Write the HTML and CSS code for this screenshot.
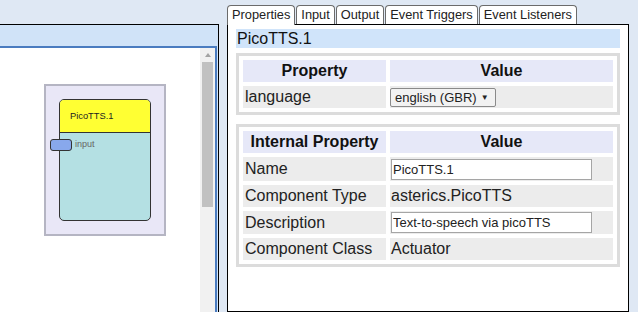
FILE: index.html
```html
<!DOCTYPE html>
<html lang="en">
<head>
  <meta charset="UTF-8">
  <title>ACS - PicoTTS.1</title>
  <link rel="stylesheet" href="styles.css">
</head>
<body>
  <div class="workspace">
    <section class="model-panel">
      <div class="model-head"></div>
      <div class="model-view">
        <div class="canvas">
          <div class="component-frame">
            <div class="component">
              <div class="component-head">PicoTTS.1</div>
              <div class="component-body">
                <span class="port"></span>
                <span class="port-label">input</span>
              </div>
            </div>
          </div>
        </div>
        <div class="scrollbar">
          <span class="arrow-up"></span>
          <div class="thumb"></div>
        </div>
      </div>
    </section>

    <section class="props">
      <nav class="tabs">
        <span class="tab active">Properties</span>
        <span class="tab">Input</span>
        <span class="tab">Output</span>
        <span class="tab">Event Triggers</span>
        <span class="tab">Event Listeners</span>
      </nav>
      <div class="tab-body">
        <div class="title">PicoTTS.1</div>

        <table class="grid">
          <thead>
            <tr>
              <th class="key">Property</th>
              <th>Value</th>
            </tr>
          </thead>
          <tbody>
            <tr>
              <td>language</td>
              <td><span class="dropdown">english (GBR) <span class="caret">▼</span></span></td>
            </tr>
          </tbody>
        </table>

        <table class="grid internal">
          <thead>
            <tr>
              <th class="key">Internal Property</th>
              <th>Value</th>
            </tr>
          </thead>
          <tbody>
            <tr class="input-row first">
              <td>Name</td>
              <td><input type="text" class="field" value="PicoTTS.1"></td>
            </tr>
            <tr>
              <td>Component Type</td>
              <td>asterics.PicoTTS</td>
            </tr>
            <tr class="input-row">
              <td>Description</td>
              <td><input type="text" class="field" value="Text-to-speech via picoTTS"></td>
            </tr>
            <tr>
              <td>Component Class</td>
              <td>Actuator</td>
            </tr>
          </tbody>
        </table>
      </div>
    </section>
  </div>
</body>
</html>
```

FILE: styles.css
```css
body {
  margin: 0;
  background-color: #dfe8f4;
  font-family: 'Liberation Sans', Arial, sans-serif;
  color: #222;
  height: 312px;
  overflow: hidden;
}

.workspace {
  display: flex;
  align-items: flex-start;
  height: 312px;
}

/* left: model designer */
.model-panel {
  width: 218px;
  height: 288px;
  margin-top: 24px;
  border-top: 1px solid #000;
  border-right: 1px solid #000;
  background-color: #d0e3f8;
  display: flex;
  flex-direction: column;
}

.model-head {
  height: 21px;
}

.model-view {
  flex: 1;
  display: flex;
  margin-right: 1px;
  border-top: 2px solid #4a7cc0;
  border-right: 2px solid #4a7cc0;
  background-color: #fff;
}

.canvas {
  flex: 1;
  position: relative;
}

.component-frame {
  position: absolute;
  left: 44px;
  top: 36px;
  padding: 13px;
  border: 2px solid #b5b5c3;
  background-color: #e9e7f7;
}

.component {
  position: relative;
  width: 90px;
  height: 120px;
  border: 1px solid #333;
  border-radius: 5px;
  background-color: #b4e0e3;
  display: flex;
  flex-direction: column;
}

.component-head {
  height: 32px;
  border-bottom: 1px solid #333;
  border-radius: 4px 4px 0 0;
  background-color: #ffff33;
  display: flex;
  align-items: center;
  padding-left: 10px;
  font-size: 9.3px;
  color: #222;
}

.component-body {
  padding: 6px 0 0 15px;
  font-size: 9px;
  line-height: 11px;
}

.port {
  position: absolute;
  left: -10px;
  top: 39px;
  width: 20px;
  height: 10px;
  border: 1px solid #333;
  border-radius: 3px;
  background-color: #88a8ec;
}

.port-label {
  color: #666;
}

.scrollbar {
  width: 15px;
  background-color: #f1f1f1;
  display: flex;
  flex-direction: column;
  align-items: center;
}

.arrow-up {
  margin-top: 5px;
  width: 0;
  height: 0;
  border-left: 3.5px solid transparent;
  border-right: 3.5px solid transparent;
  border-bottom: 4px solid #a3a3a3;
}

.thumb {
  margin-top: 5px;
  width: 11px;
  height: 145px;
  background-color: #c1c1c1;
}

/* right: properties */
.props {
  width: 402px;
  height: 307px;
  margin-left: 8px;
  margin-top: 5px;
  display: flex;
  flex-direction: column;
}

.tabs {
  display: flex;
  align-items: flex-start;
  gap: 1px;
  margin-bottom: -1px;
  position: relative;
  z-index: 1;
}

.tab {
  border: 1px solid #6b6b6b;
  border-bottom: none;
  border-radius: 4px 4px 0 0;
  background-color: #fff;
  padding: 0 4px;
  font-size: 12.8px;
  line-height: 18px;
  color: #222;
}

.tab.active {
  padding-bottom: 1px;
}

.tab-body {
  flex: 1;
  border: 1px solid #000;
  background-color: #fff;
  padding: 4px 8px 0;
}

.title {
  background-color: #d0e4fa;
  font-size: 16px;
  line-height: 19px;
  padding-left: 1px;
  color: #111;
}

.grid {
  width: 100%;
  margin-top: 5px;
  border: 3px solid #dcdcdc;
  border-spacing: 4px;
  font-size: 16px;
}

.grid.internal {
  margin-top: 9px;
}

.grid th,
.grid td {
  height: 22px;
  padding: 0 2px;
}

.grid th {
  background-color: #e6e8f8;
  font-weight: bold;
  text-align: center;
  color: #111;
}

.grid th.key {
  width: 139px;
}

.grid td {
  background-color: #ececec;
  text-align: left;
  color: #222;
}

.grid td + td {
  padding-left: 1px;
}

.input-row td {
  height: 23px;
}

.input-row.first td {
  height: 24px;
}

.dropdown {
  display: inline-flex;
  align-items: center;
  height: 17px;
  padding: 0 6px 0 4px;
  border: 1px solid #8a8a8a;
  border-radius: 2px;
  background-color: #f2f2f2;
  font-size: 13px;
  color: #222;
  vertical-align: middle;
  margin-left: -1px;
}

.caret {
  font-size: 8px;
  margin-left: 4px;
}

.field {
  display: block;
  box-sizing: border-box;
  width: 201px;
  height: 21px;
  margin: 0;
  padding: 0 1px;
  border: 1px solid #a5a5a5;
  background-color: #fff;
  font-family: 'Liberation Sans', Arial, sans-serif;
  font-size: 13px;
  color: #222;
  outline: none;
}
```
